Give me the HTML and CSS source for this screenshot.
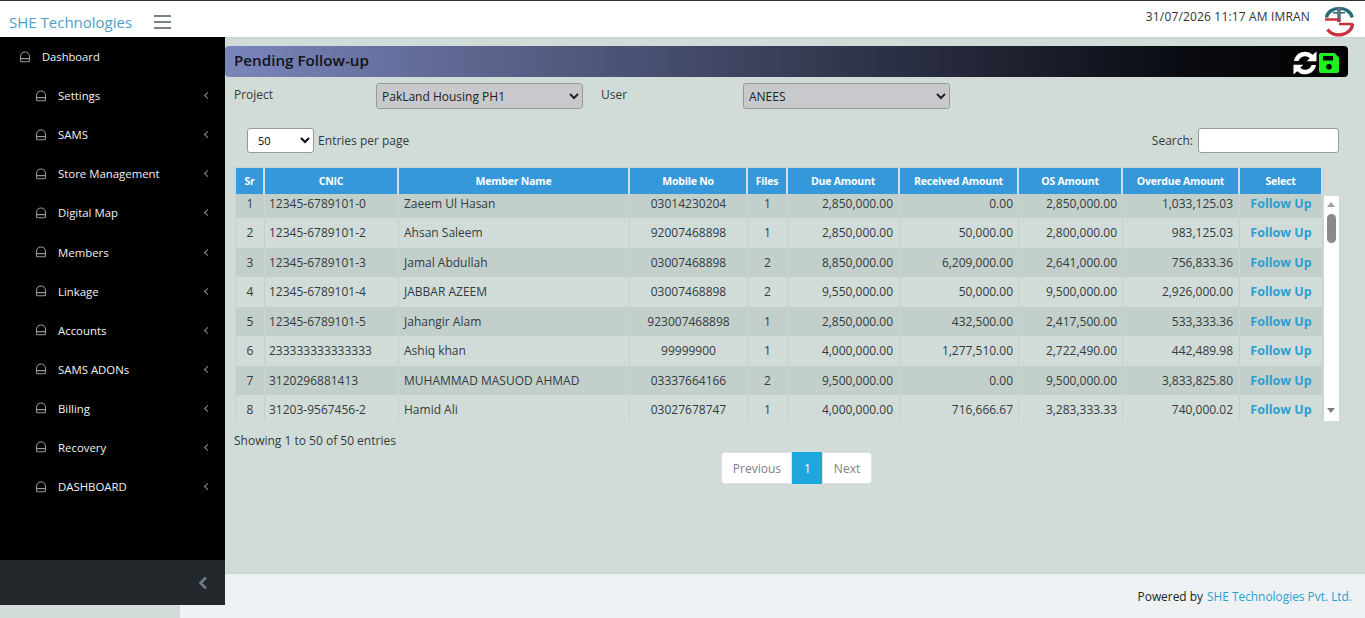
FILE: index.html
```html
<!DOCTYPE html>
<html lang="en">
<head>
    <meta charset="UTF-8">
    <title>SHE Technologies - Pending Follow-up</title>
    <link rel="stylesheet" href="styles.css">
</head>
<body>
<header class="topbar">
    <div class="brand">SHE Technologies</div>
    <div class="burger"><span></span><span></span><span></span></div>
    <div class="topbar-right">
        <span class="session">31/07/2026 11:17 AM IMRAN</span>
        <svg class="logo" viewBox="0 0 30 31" width="30" height="31">
            <path d="M2.5 11.5 A12.8 10 0 0 1 28 11.5" fill="none" stroke="#2b6a78" stroke-width="3.4"/>
            <rect x="9" y="6" width="12" height="1.6" fill="#2b6a78"/>
            <rect x="13.2" y="1" width="3.6" height="15" fill="#5a7580"/>
            <path d="M1 13.5 H13 Q15 13.5 15 16 M15 18 H29" fill="none" stroke="#c8323c" stroke-width="2.6"/>
            <path d="M28.6 18 A13.6 11.5 0 0 1 3.5 23.5" fill="none" stroke="#c8323c" stroke-width="3.4"/>
        </svg>
    </div>
</header>
<div class="shell">
    <aside class="sidebar">
        <nav class="menu">
            <a class="menu-top" href="#"><svg class="home"><use href="#i-home"/></svg>Dashboard</a>
            <a class="menu-item" href="#"><svg class="home"><use href="#i-home"/></svg>Settings<i class="caret"></i></a>
            <a class="menu-item" href="#"><svg class="home"><use href="#i-home"/></svg>SAMS<i class="caret"></i></a>
            <a class="menu-item" href="#"><svg class="home"><use href="#i-home"/></svg>Store Management<i class="caret"></i></a>
            <a class="menu-item" href="#"><svg class="home"><use href="#i-home"/></svg>Digital Map<i class="caret"></i></a>
            <a class="menu-item" href="#"><svg class="home"><use href="#i-home"/></svg>Members<i class="caret"></i></a>
            <a class="menu-item" href="#"><svg class="home"><use href="#i-home"/></svg>Linkage<i class="caret"></i></a>
            <a class="menu-item" href="#"><svg class="home"><use href="#i-home"/></svg>Accounts<i class="caret"></i></a>
            <a class="menu-item" href="#"><svg class="home"><use href="#i-home"/></svg>SAMS ADONs<i class="caret"></i></a>
            <a class="menu-item" href="#"><svg class="home"><use href="#i-home"/></svg>Billing<i class="caret"></i></a>
            <a class="menu-item" href="#"><svg class="home"><use href="#i-home"/></svg>Recovery<i class="caret"></i></a>
            <a class="menu-item" href="#"><svg class="home"><use href="#i-home"/></svg>DASHBOARD<i class="caret"></i></a>
        </nav>
        <div class="collapse"><svg width="10" height="14" viewBox="0 0 10 14"><path d="M8 1.5 L2.5 7 L8 12.5" fill="none" stroke="#6c7a89" stroke-width="2.6"/></svg></div>
    </aside>
    <div class="content">
        <main class="page">
            <div class="title-bar">
                <h1>Pending Follow-up</h1>
                <div class="title-icons">
                    <svg width="24" height="24" viewBox="2 2 20 20"><path d="M2.8 10.4 A9.4 9.4 0 0 1 18.5 5.2 L21.6 2.4 V10.6 H13.4 L16 8 A5.6 5.6 0 0 0 6.6 10.4 Z M21.2 13.6 A9.4 9.4 0 0 1 5.5 18.8 L2.4 21.6 V13.4 H10.6 L8 16 A5.6 5.6 0 0 0 17.4 13.6 Z" fill="#fff"/></svg>
                    <svg width="22" height="22" viewBox="0 0 22 22"><path fill-rule="evenodd" d="M2.5 1 H16.5 L21 5.5 V19 A2 2 0 0 1 19 21 H3 A2 2 0 0 1 1 19 V3 A2 2 0 0 1 2.5 1 Z M5 4 V8.5 H15 V4 Z M11 12 A2.8 2.8 0 1 0 11 17.6 A2.8 2.8 0 1 0 11 12 Z" fill="#1df01d"/></svg>
                </div>
            </div>
            <div class="filters">
                <label class="filter-label">Project</label>
                <select class="filter-select"><option>PakLand Housing PH1</option></select>
                <label class="filter-label user-label">User</label>
                <select class="filter-select"><option>ANEES</option></select>
            </div>
            <div class="table-top">
                <div class="per-page"><select class="entries"><option>50</option></select> Entries per page</div>
                <div class="search">Search: <input type="text" aria-label="Search"></div>
            </div>
            <div class="table-wrap">
                <table class="head-table">
                    <colgroup><col class="c1"><col class="c2"><col class="c3"><col class="c4"><col class="c5"><col class="c6"><col class="c7"><col class="c8"><col class="c9"><col class="c10"></colgroup>
                    <thead>
                        <tr><th>Sr</th><th>CNIC</th><th>Member Name</th><th>Mobile No</th><th>Files</th><th>Due Amount</th><th>Received Amount</th><th>OS Amount</th><th>Overdue Amount</th><th>Select</th></tr>
                    </thead>
                </table>
                <div class="body-scroll">
                    <table class="body-table">
                        <colgroup><col class="c1"><col class="c2"><col class="c3"><col class="c4"><col class="c5"><col class="c6"><col class="c7"><col class="c8"><col class="c9"><col class="c10"></colgroup>
                        <tbody>
                            <tr class="first"><td class="ctr">1</td><td>12345-6789101-0</td><td>Zaeem Ul Hasan</td><td class="ctr">03014230204</td><td class="ctr">1</td><td class="num">2,850,000.00</td><td class="num">0.00</td><td class="num">2,850,000.00</td><td class="num">1,033,125.03</td><td class="ctr"><a class="follow" href="#">Follow Up</a></td></tr>
                            <tr><td class="ctr">2</td><td>12345-6789101-2</td><td>Ahsan Saleem</td><td class="ctr">92007468898</td><td class="ctr">1</td><td class="num">2,850,000.00</td><td class="num">50,000.00</td><td class="num">2,800,000.00</td><td class="num">983,125.03</td><td class="ctr"><a class="follow" href="#">Follow Up</a></td></tr>
                            <tr><td class="ctr">3</td><td>12345-6789101-3</td><td>Jamal Abdullah</td><td class="ctr">03007468898</td><td class="ctr">2</td><td class="num">8,850,000.00</td><td class="num">6,209,000.00</td><td class="num">2,641,000.00</td><td class="num">756,833.36</td><td class="ctr"><a class="follow" href="#">Follow Up</a></td></tr>
                            <tr><td class="ctr">4</td><td>12345-6789101-4</td><td>JABBAR AZEEM</td><td class="ctr">03007468898</td><td class="ctr">2</td><td class="num">9,550,000.00</td><td class="num">50,000.00</td><td class="num">9,500,000.00</td><td class="num">2,926,000.00</td><td class="ctr"><a class="follow" href="#">Follow Up</a></td></tr>
                            <tr><td class="ctr">5</td><td>12345-6789101-5</td><td>Jahangir Alam</td><td class="ctr">923007468898</td><td class="ctr">1</td><td class="num">2,850,000.00</td><td class="num">432,500.00</td><td class="num">2,417,500.00</td><td class="num">533,333.36</td><td class="ctr"><a class="follow" href="#">Follow Up</a></td></tr>
                            <tr><td class="ctr">6</td><td>233333333333333</td><td>Ashiq khan</td><td class="ctr">99999900</td><td class="ctr">1</td><td class="num">4,000,000.00</td><td class="num">1,277,510.00</td><td class="num">2,722,490.00</td><td class="num">442,489.98</td><td class="ctr"><a class="follow" href="#">Follow Up</a></td></tr>
                            <tr><td class="ctr">7</td><td>3120296881413</td><td>MUHAMMAD MASUOD AHMAD</td><td class="ctr">03337664166</td><td class="ctr">2</td><td class="num">9,500,000.00</td><td class="num">0.00</td><td class="num">9,500,000.00</td><td class="num">3,833,825.80</td><td class="ctr"><a class="follow" href="#">Follow Up</a></td></tr>
                            <tr><td class="ctr">8</td><td>31203-9567456-2</td><td>Hamid Ali</td><td class="ctr">03027678747</td><td class="ctr">1</td><td class="num">4,000,000.00</td><td class="num">716,666.67</td><td class="num">3,283,333.33</td><td class="num">740,000.02</td><td class="ctr"><a class="follow" href="#">Follow Up</a></td></tr>
                        </tbody>
                    </table>
                    <div class="scrollbar">
                        <i class="arrow-up"></i>
                        <i class="thumb"></i>
                        <i class="arrow-down"></i>
                    </div>
                </div>
            </div>
            <div class="table-info">Showing 1 to 50 of 50 entries</div>
            <div class="pagination">
                <a class="page-link" href="#">Previous</a>
                <a class="page-link active" href="#">1</a>
                <a class="page-link" href="#">Next</a>
            </div>
        </main>
        <footer class="footer">Powered by <a href="#">SHE Technologies Pvt. Ltd.</a></footer>
    </div>
</div>
<svg width="0" height="0" class="defs">
    <symbol id="i-home" viewBox="0 0 12 12">
        <path d="M1.5 5.5 A4.5 4.5 0 0 1 10.5 5.5 V9.5 A1.3 1.3 0 0 1 9.2 10.8 H2.8 A1.3 1.3 0 0 1 1.5 9.5 Z M1.5 7.6 H10.5" fill="none" stroke="#8f979c" stroke-width="1.1"/>
    </symbol>
</svg>
</body>
</html>
```

FILE: styles.css
```css
:root {
    --page-bg: #d1dcd8;
    --sidebar-bg: #000000;
    --head-blue: #3498db;
    --link-blue: #2a9fd0;
    --row-odd: #c3cfcb;
    --row-even: #d1dcd8;
    --text-color: #333b3f;
}
html, body {
    height: 100%;
}
body {
    margin: 0;
    height: 618px;
    overflow: hidden;
    background: linear-gradient(to right, var(--page-bg) 180px, #eef2f5 180px);
    font-family: "Open Sans", "Noto Sans", sans-serif;
    font-size: 12px;
    color: var(--text-color);
}
.defs {
    position: absolute;
}
.topbar {
    height: 36px;
    box-sizing: content-box;
    display: flex;
    align-items: center;
    background: #fff;
    border-top: 1px solid #333;
    padding: 0 0 0 9px;
}
.brand {
    font-size: 15px;
    color: #4a9fc9;
    width: 145px;
    padding-top: 6px;
}
.burger {
    display: flex;
    flex-direction: column;
    gap: 4px;
    width: 17px;
    padding-top: 6px;
}
.burger span {
    display: block;
    height: 2px;
    background: #7c8388;
}
.topbar-right {
    margin-left: auto;
    display: flex;
    align-items: center;
    gap: 14px;
    padding-right: 11px;
}
.session {
    color: #333;
    letter-spacing: 0.16px;
    margin-bottom: 5px;
}
.logo {
    margin-top: 4px;
}
.shell {
    display: flex;
    height: 581px;
}
.sidebar {
    width: 225px;
    height: 568px;
    flex: none;
    display: flex;
    flex-direction: column;
    background: var(--sidebar-bg);
}
.menu {
    flex: 1;
    font-size: 11.4px;
}
.menu a {
    display: flex;
    align-items: center;
    color: #f2f2f2;
    text-decoration: none;
    height: 39.1px;
}
.menu-top {
    padding-left: 19px;
    font-size: 11.2px;
}
.menu-item {
    padding-left: 35px;
    padding-right: 15px;
}
.home {
    width: 12px;
    height: 12px;
    margin-right: 11px;
}
.caret {
    margin-left: auto;
    width: 4px;
    height: 4px;
    border-left: 1.3px solid #8a9298;
    border-bottom: 1.3px solid #8a9298;
    transform: rotate(45deg);
}
.collapse {
    height: 45px;
    display: flex;
    align-items: center;
    justify-content: flex-end;
    padding-right: 17px;
    background: #24282d;
}
.content {
    flex: 1;
    display: flex;
    flex-direction: column;
    min-width: 0;
}
.page {
    flex: 1;
    background: var(--page-bg);
    padding: 8px 17px 0 0;
    border-top: 1px solid #c9d2cf;
}
.title-bar {
    height: 31px;
    display: flex;
    align-items: center;
    justify-content: space-between;
    padding: 0 8px 0 9px;
    border-radius: 4px;
    background: linear-gradient(to right, #7a85bb, #0a0c12 85%, #000);
}
.title-bar h1 {
    margin: 0 0 4px;
    font-size: 15.2px;
    font-weight: 600;
    color: #101318;
}
.title-icons {
    display: flex;
    align-items: center;
    gap: 1px;
    margin-top: 3px;
}
.title-icons svg {
    display: block;
}
.filters {
    display: grid;
    grid-template-columns: 142px 207px 18px 142px 207px;
    align-items: start;
    padding: 6px 0 0 9px;
}
.filter-label {
    padding-top: 3px;
}
.user-label {
    grid-column: 4;
}
.filter-select {
    height: 26px;
    font: inherit;
    padding: 0 1px;
    color: #222;
    background: #c8c9cc;
    border: 1px solid #999;
    border-radius: 3px;
}
.filters .filter-select:last-child {
    grid-column: 5;
}
.table-top {
    display: flex;
    justify-content: space-between;
    align-items: center;
    padding: 19px 9px 0 22px;
}
.entries {
    width: 67px;
    height: 25px;
    font: inherit;
    font-size: 11px;
    padding-left: 6px;
    margin-right: 1px;
    background: #fff;
    border: 1px solid #999;
    border-radius: 3px;
}
.search {
    display: flex;
    align-items: center;
    gap: 5px;
}
.search input {
    width: 139px;
    height: 23px;
    padding: 0;
    background: #fff;
    border: 1px solid #999;
    border-radius: 3px;
}
.table-wrap {
    margin: 15px 7px 0 10px;
}
table {
    border-collapse: separate;
    border-spacing: 0;
    table-layout: fixed;
    width: 1088px;
}
.c1 { width: 30px; }
.c2 { width: 134px; }
.c3 { width: 231px; }
.c4 { width: 118px; }
.c5 { width: 40px; }
.c6 { width: 112px; }
.c7 { width: 119px; }
.c8 { width: 104px; }
.c9 { width: 117px; }
.c10 { width: 83px; }
.head-table {
    outline: 1px solid #c4d2d4;
}
th {
    height: 26px;
    padding: 0;
    background: var(--head-blue);
    color: #fff;
    font-size: 10.5px;
    font-weight: 700;
    letter-spacing: -0.2px;
    text-align: center;
    border-right: 2px solid #cfe0ea;
}
th:first-child {
    border-left: 1px solid #cfe0ea;
}
.body-scroll {
    position: relative;
    height: 227px;
    width: 1104px;
    overflow: hidden;
}
td {
    height: 29.5px;
    padding: 0 5px;
    border-right: 1px solid #c3cfcb;
    white-space: nowrap;
    overflow: hidden;
}
td:first-child {
    border-left: 1px solid #c3cfcb;
}
td:nth-child(2) {
    padding-left: 4px;
}
td:nth-child(6), td:nth-child(9) {
    padding-right: 6px;
}
tbody tr:nth-child(odd) {
    background: var(--row-odd);
}
tbody tr:nth-child(odd) td {
    border-color: #cad6d2;
}
tbody tr:nth-child(even) {
    background: var(--row-even);
}
tr.first td {
    height: 23px;
    vertical-align: top;
    padding-top: 1px;
    line-height: 17px;
}
.ctr {
    text-align: center;
}
.num {
    text-align: right;
}
.follow {
    color: var(--link-blue);
    font-weight: 700;
    text-decoration: none;
    font-size: 12.5px;
}
.scrollbar {
    position: absolute;
    left: 1089px;
    top: 2px;
    width: 15px;
    bottom: 0;
    background: #fff;
}
.arrow-up, .arrow-down {
    position: absolute;
    left: 3px;
    width: 0;
    height: 0;
    border-left: 4.5px solid transparent;
    border-right: 4.5px solid transparent;
}
.arrow-up {
    top: 6px;
    border-bottom: 5px solid #a0a0a0;
}
.arrow-down {
    bottom: 8px;
    border-top: 5px solid #808080;
}
.thumb {
    position: absolute;
    left: 3px;
    top: 18px;
    width: 9px;
    height: 29px;
    border-radius: 5px;
    background: #8a8a8a;
}
.table-info {
    padding: 11px 0 0 9px;
}
.pagination {
    display: flex;
    justify-content: center;
    margin-top: 3px;
    padding-left: 20px;
}
.page-link {
    display: flex;
    align-items: center;
    height: 30px;
    padding: 0 10.5px;
    background: #fff;
    color: #7b8188;
    text-decoration: none;
    border: 1px solid #dee2e6;
}
.page-link:first-child {
    border-radius: 4px 0 0 4px;
}
.page-link:last-child {
    border-radius: 0 4px 4px 0;
}
.page-link.active {
    background: #1ea7dc;
    border-color: #1ea7dc;
    color: #fff;
}
.footer {
    height: 44px;
    display: flex;
    align-items: center;
    justify-content: flex-end;
    gap: 4px;
    padding-right: 13px;
    background: #eef2f5;
    border-top: 1px solid #c4d2d4;
    color: #222;
    font-size: 11.9px;
}
.footer a {
    color: #2a9fd0;
    text-decoration: none;
}
```
